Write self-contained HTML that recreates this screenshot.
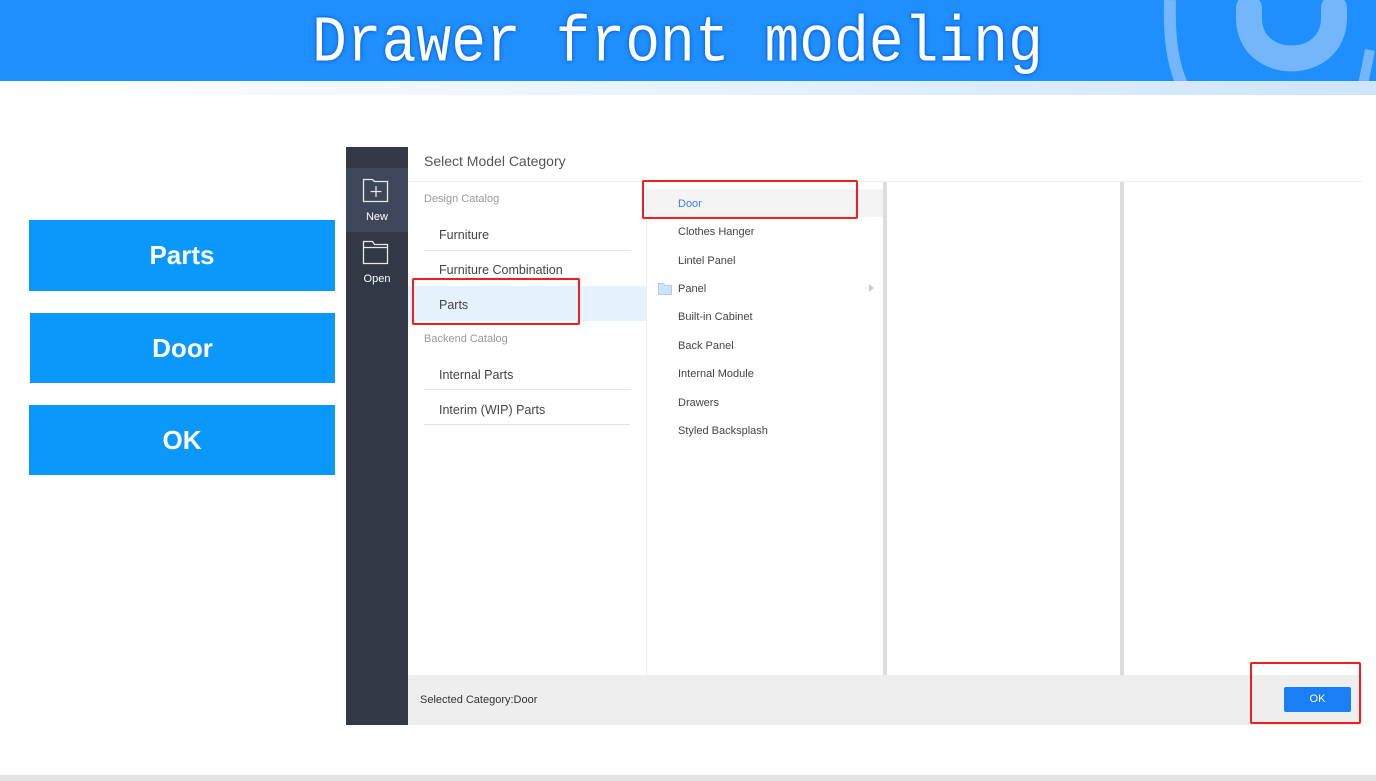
<!DOCTYPE html>
<html><head><meta charset="utf-8"><style>
*{margin:0;padding:0;box-sizing:border-box}
body{width:1376px;height:781px;position:relative;background:#fff;font-family:"Liberation Sans",sans-serif;overflow:hidden}
.abs{position:absolute}
.hdr{left:0;top:0;width:1376px;height:81px;background:#1e8ffd;overflow:hidden}
.strip{left:0;top:81px;width:1376px;height:14px;background:linear-gradient(90deg,#fff,#cfe5fb)}
.title{left:312px;top:8px;font-family:"Liberation Mono",monospace;font-size:58px;line-height:66px;color:#fff;transform:scaleY(1.12);transform-origin:top left;text-shadow:0 0 4px #0a5fe0,0 0 2px #0a5fe0}
.lb{left:29px;width:306px;height:71px;background:#0a99fb;color:#fff;font-weight:bold;font-size:26px;display:flex;align-items:center;justify-content:center}
.side{left:346px;top:147px;width:62px;height:578px;background:#323846}
.cat{left:424px;font-size:11px;color:#999}
.it{left:439px;font-size:12.5px;color:#444}
.ln{left:424px;width:206px;height:1px;background:#e4e4e4}
.c2{left:678px;font-size:11px;color:#444}
.red{border:2px solid #f21d1d;border-radius:2px}
</style></head><body>
<div class="abs hdr">
<svg class="abs" style="left:1160px;top:0" width="216" height="81"><path d="M10 0 Q8 60 25 90" stroke="#74b6fb" stroke-width="12" fill="none"/><path d="M89 8 L89 18 C89 72 174 72 174 18 L174 8" stroke="#74b6fb" stroke-width="26" fill="none" stroke-linecap="round"/><path d="M210 50 L202 90" stroke="#74b6fb" stroke-width="10"/></svg>
<div class="abs title">Drawer front modeling</div>
</div>
<div class="abs strip"></div>
<div class="abs lb" style="top:220px">Parts</div>
<div class="abs lb" style="top:313px;left:30px;width:305px;height:70px">Door</div>
<div class="abs lb" style="top:405px;height:70px">OK</div>

<div class="abs side"></div>
<div class="abs" style="left:346px;top:168px;width:62px;height:64px;background:#3e4659"></div>
<svg class="abs" style="left:362px;top:177px" width="28" height="26"><path d="M1.5 2.5h9l2 2h13v20h-24z" fill="none" stroke="#e8e8e8" stroke-width="1.3"/><path d="M14 9v11M8.5 14.5h11" stroke="#e8e8e8" stroke-width="1.3"/></svg>
<div class="abs" style="left:346px;top:211px;width:62px;text-align:center;color:#fff;font-size:11px">New</div>
<svg class="abs" style="left:362px;top:240px" width="28" height="26"><path d="M1.5 1.5h9l2 3h13v19h-24z M1.5 7.5h24" fill="none" stroke="#e8e8e8" stroke-width="1.3"/></svg>
<div class="abs" style="left:346px;top:273px;width:62px;text-align:center;color:#fff;font-size:11px">Open</div>

<div class="abs" style="left:408px;top:147px;width:954px;height:578px;background:#fff"></div>
<div class="abs" style="left:424px;top:153px;font-size:14px;color:#555">Select Model Category</div>
<div class="abs" style="left:408px;top:181px;width:954px;height:1px;background:#eee"></div>
<div class="abs" style="left:646px;top:182px;width:1px;height:493px;background:#eee"></div>
<div class="abs" style="left:883px;top:182px;width:4px;height:493px;background:#ddd"></div>
<div class="abs" style="left:1120px;top:182px;width:4px;height:493px;background:#ddd"></div>

<div class="abs cat" style="top:193px">Design Catalog</div>
<div class="abs it" style="top:228px">Furniture</div>
<div class="abs ln" style="top:250px"></div>
<div class="abs it" style="top:263px">Furniture Combination</div>
<div class="abs" style="left:408px;top:286px;width:238px;height:35px;background:#e5f1fd"></div>
<div class="abs it" style="top:298px">Parts</div>
<div class="abs cat" style="top:333px">Backend Catalog</div>
<div class="abs it" style="top:368px">Internal Parts</div>
<div class="abs ln" style="top:389px"></div>
<div class="abs it" style="top:403px">Interim (WIP) Parts</div>
<div class="abs ln" style="top:424px"></div>

<div class="abs" style="left:647px;top:189px;width:236px;height:28px;background:#f4f4f4"></div>
<div class="abs c2" style="top:198px;color:#3a7ef0">Door</div>
<div class="abs c2" style="top:226px">Clothes Hanger</div>
<div class="abs c2" style="top:255px">Lintel Panel</div>
<svg class="abs" style="left:658px;top:283px" width="14" height="12"><path d="M0.5 0.5h5l1.5 2h6.5v9h-13z" fill="#cfe3fb" stroke="#a9cbf5"/></svg>
<div class="abs c2" style="top:283px">Panel</div>
<div class="abs" style="left:869px;top:284px;width:0;height:0;border-left:5px solid #ccc;border-top:4px solid transparent;border-bottom:4px solid transparent"></div>
<div class="abs c2" style="top:311px">Built-in Cabinet</div>
<div class="abs c2" style="top:340px">Back Panel</div>
<div class="abs c2" style="top:368px">Internal Module</div>
<div class="abs c2" style="top:397px">Drawers</div>
<div class="abs c2" style="top:425px">Styled Backsplash</div>

<div class="abs" style="left:408px;top:675px;width:954px;height:50px;background:#eeeeee"></div>
<div class="abs" style="left:420px;top:694px;font-size:11px;color:#333">Selected Category:Door</div>
<div class="abs" style="left:1284px;top:687px;width:67px;height:25px;background:#1a7ef6;border-radius:2px;color:#fff;font-size:11px;text-align:center;line-height:25px">OK</div>

<div class="abs red" style="left:642px;top:180px;width:216px;height:39px"></div>
<div class="abs red" style="left:412px;top:278px;width:168px;height:47px"></div>
<div class="abs red" style="left:1250px;top:662px;width:111px;height:62px"></div>

<div class="abs" style="left:0;top:775px;width:1376px;height:6px;background:#e4e4e4"></div>
</body></html>
